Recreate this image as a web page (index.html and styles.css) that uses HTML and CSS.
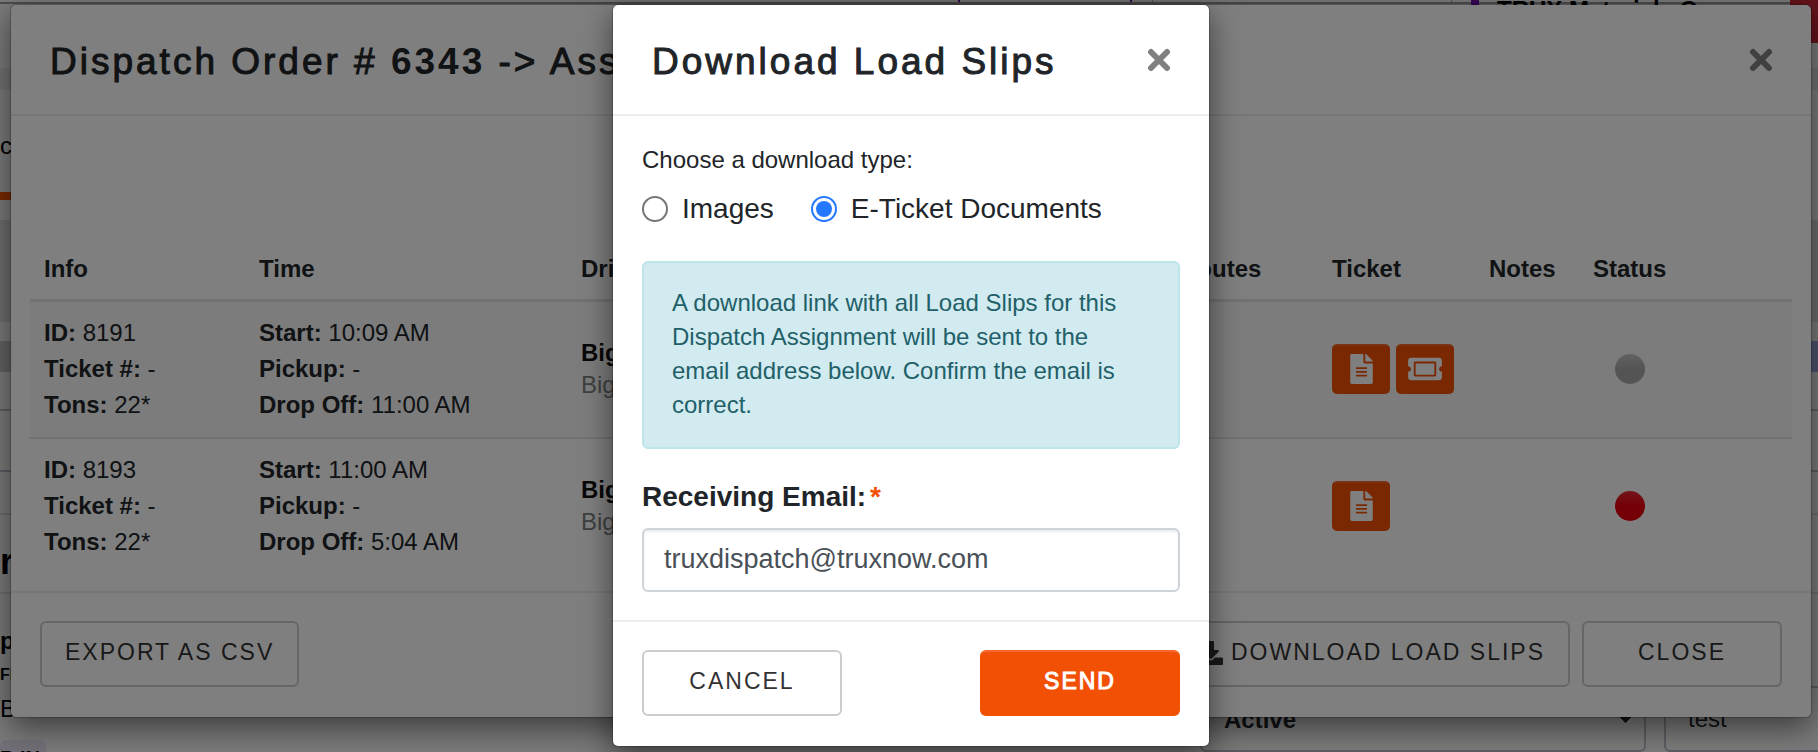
FILE: index.html
```
<!DOCTYPE html>
<html lang="en">
<head>
  <meta charset="UTF-8">
  <meta name="viewport" content="width=device-width, initial-scale=1.0">
  <title>Dispatch Order</title>
  <link rel="stylesheet" href="styles.css">
</head>
<body>
  <svg hidden>
    <symbol id="icon-close" viewBox="0 0 24 24">
      <path d="M4 4L20 20M20 4L4 20" fill="none" stroke="currentColor" stroke-width="6" stroke-linecap="round"/>
    </symbol>
    <symbol id="icon-file" viewBox="0 0 384 512">
      <path fill="currentColor" fill-rule="evenodd" d="M224 136V0H24C11 0 0 11 0 24v464c0 13 11 24 24 24h336c13 0 24-11 24-24V160H248c-13 0-24-11-24-24zm64 236c0 7-5 12-12 12H108c-7 0-12-5-12-12v-8c0-7 5-12 12-12h168c7 0 12 5 12 12zm0-64c0 7-5 12-12 12H108c-7 0-12-5-12-12v-8c0-7 5-12 12-12h168c7 0 12 5 12 12zm0-72v8c0 7-5 12-12 12H108c-7 0-12-5-12-12v-8c0-7 5-12 12-12h168c7 0 12 5 12 12zM384 122v6H256V0h6c6 0 12 3 17 7l98 98c4 4 7 11 7 17z"/>
    </symbol>
    <symbol id="icon-ticket" viewBox="0 0 576 512">
      <path fill="currentColor" fill-rule="evenodd" d="M128 160h320v192H128zm400 96c0 27 21 48 48 48v96c0 27-21 48-48 48H48c-27 0-48-21-48-48v-96c27 0 48-21 48-48s-21-48-48-48v-96c0-27 21-48 48-48h480c27 0 48 21 48 48v96c-27 0-48 21-48 48zM480 152c0-13-11-24-24-24H120c-13 0-24 11-24 24v208c0 13 11 24 24 24h336c13 0 24-11 24-24z"/>
    </symbol>
    <symbol id="icon-download" viewBox="0 0 512 512">
      <path fill="currentColor" d="M216 0h80c13 0 24 11 24 24v168h88c18 0 27 22 14 34L270 378c-8 7-20 7-28 0L90 226c-13-12-4-34 14-34h88V24c0-13 11-24 24-24zm296 376v112c0 13-11 24-24 24H24c-13 0-24-11-24-24V376c0-13 11-24 24-24h147l49 49c20 20 52 20 72 0l49-49h147c13 0 24 11 24 24z"/>
    </symbol>
  </svg>

  <div class="page">
    <div class="tabs">
      <div class="tabs-line">
        <span class="tab"></span>
        <span class="tab-end"></span>
        <span class="customer">TRUX Materials Corp</span>
      </div>
      <span class="alert-flag"></span>
    </div>
    <div class="band"></div>
    <div class="nav"><span>c</span></div>
    <div class="toolbar"></div>
    <div class="list-head"></div>
    <div class="list-row short"></div>
    <div class="list-row"></div>
    <div class="list-row faint"></div>
    <div class="section-title">r</div>
    <div class="details">
      <strong>p</strong>
      <small>FI</small>
      <span>B</span>
    </div>
    <div class="fields">
      <span class="chip">B IN</span>
      <div class="field-row">
        <select class="field field-status" aria-label="Status"><option>Active</option></select>
        <input class="field" type="text" value="test" aria-label="Name">
      </div>
    </div>
  </div>

  <div class="layer">
    <div class="modal">
      <div class="modal-header">
        <h2>Dispatch Order # <b>6343</b> -&gt; Ass</h2>
        <button class="close" aria-label="Close"><svg><use href="#icon-close"/></svg></button>
      </div>
      <div class="modal-body loads">
        <table>
          <thead>
            <tr>
              <th class="col-info">Info</th>
              <th class="col-time">Time</th>
              <th>Driver</th>
              <th class="col-routes">Routes</th>
              <th class="col-ticket">Ticket</th>
              <th class="col-notes">Notes</th>
              <th class="col-status">Status</th>
            </tr>
          </thead>
          <tbody>
            <tr>
              <td><b>ID:</b> 8191<br><b>Ticket #:</b> -<br><b>Tons:</b> 22*</td>
              <td><b>Start:</b> 10:09 AM<br><b>Pickup:</b> -<br><b>Drop Off:</b> 11:00 AM</td>
              <td class="driver"><b>Big</b><span>Big</span></td>
              <td></td>
              <td>
                <div class="ticket-actions">
                  <button class="icon-btn" aria-label="Load slip"><svg class="file"><use href="#icon-file"/></svg></button>
                  <button class="icon-btn" aria-label="E-ticket"><svg class="ticket"><use href="#icon-ticket"/></svg></button>
                </div>
              </td>
              <td></td>
              <td><div class="dot"></div></td>
            </tr>
            <tr>
              <td><b>ID:</b> 8193<br><b>Ticket #:</b> -<br><b>Tons:</b> 22*</td>
              <td><b>Start:</b> 11:00 AM<br><b>Pickup:</b> -<br><b>Drop Off:</b> 5:04 AM</td>
              <td class="driver"><b>Big</b><span>Big</span></td>
              <td></td>
              <td>
                <div class="ticket-actions">
                  <button class="icon-btn" aria-label="Load slip"><svg class="file"><use href="#icon-file"/></svg></button>
                </div>
              </td>
              <td></td>
              <td><div class="dot dot-red"></div></td>
            </tr>
          </tbody>
        </table>
      </div>
      <div class="modal-footer">
        <button class="btn">EXPORT AS CSV</button>
        <div class="btn-group">
          <button class="btn"><svg><use href="#icon-download"/></svg>DOWNLOAD LOAD SLIPS</button>
          <button class="btn btn-wide">CLOSE</button>
        </div>
      </div>
    </div>
  </div>

  <div class="layer backdrop">
    <form class="modal modal-small">
      <div class="modal-header">
        <h2>Download Load Slips</h2>
        <button type="button" class="close" aria-label="Close"><svg><use href="#icon-close"/></svg></button>
      </div>
      <div class="modal-body">
        <p>Choose a download type:</p>
        <div class="radios">
          <label><input type="radio" name="type" value="images">Images</label>
          <label><input type="radio" name="type" value="etickets" checked>E-Ticket Documents</label>
        </div>
        <div class="alert">A download link with all Load Slips for this Dispatch Assignment will be sent to the email address below. Confirm the email is correct.</div>
        <label class="email-label" for="email">Receiving Email:<span>*</span></label>
        <input class="email" id="email" type="email" value="truxdispatch@truxnow.com">
      </div>
      <div class="modal-footer">
        <button type="button" class="btn btn-wide">CANCEL</button>
        <button type="submit" class="btn btn-wide btn-primary">SEND</button>
      </div>
    </form>
  </div>
</body>
</html>
```

FILE: styles.css
```
* {
  box-sizing: border-box;
  margin: 0;
  padding: 0;
}
body {
  font-family: "Liberation Sans", Arial, sans-serif;
  font-size: 24px;
  line-height: 36px;
  color: #212529;
  display: grid;
  grid-template-columns: minmax(0, 1fr);
  grid-template-rows: 100vh;
  overflow: hidden;
}
button, input, select {
  font-family: inherit;
}

/* page behind the dialogs */
.page, .layer {
  grid-area: 1 / 1;
}
.page {
  background-color: #f5f5f5;
  overflow: hidden;
  color: #000;
}
.tabs {
  display: flex;
  justify-content: space-between;
  align-items: flex-start;
  height: 68px;
}
.tabs-line {
  flex: 1;
  display: flex;
  justify-content: flex-end;
  height: 4px;
  border-bottom: 2px solid #999;
}
.tab {
  width: 174px;
  border: solid #6a0dad;
  border-width: 0 2px;
}
.tab-end {
  width: 300px;
  margin-left: 20px;
  border: solid #aaa;
  border-width: 0 1px;
}
.customer {
  width: 319px;
  height: 20px;
  margin-left: 19px;
  padding-left: 18px;
  border-left: 8px solid #6a0dad;
  font-weight: bold;
  line-height: 20px;
}
.alert-flag {
  width: 28px;
  height: 43px;
  background-color: #c82333;
}
.band {
  height: 22px;
  background-color: #e4e4e6;
}
.nav {
  height: 130px;
  padding-top: 38px;
  line-height: 36px;
}
.nav span {
  display: block;
  width: 40px;
  height: 72px;
  border-bottom: 8px solid #f25105;
}
.toolbar {
  height: 102px;
  margin-bottom: 19px;
  background-color: #dcdcdc;
}
.list-head {
  height: 31px;
  background: linear-gradient(to right, #c4c4c4 50%, #9aa8e0 50%);
}
.list-row {
  height: 61px;
  border-bottom: 2px solid #b4bcc4;
}
.list-row.short {
  height: 39px;
}
.list-row.faint {
  height: 43px;
  border-bottom-color: #dcdcdc;
}
.section-title {
  height: 79px;
  padding-top: 29px;
  border-bottom: 2px solid #dcdcdc;
  font-size: 36px;
  font-weight: bold;
}
.details {
  height: 126px;
  padding-top: 30px;
  display: flex;
  flex-direction: column;
  line-height: 34px;
}
.details small {
  font-size: 16px;
  font-weight: bold;
}
.fields {
  display: flex;
  justify-content: space-between;
  align-items: flex-start;
}
.chip {
  width: 46px;
  margin-top: 20px;
  border-radius: 6px;
  background-color: #e6dff0;
  font-size: 20px;
  font-weight: bold;
  white-space: nowrap;
}
.field-row {
  display: flex;
  gap: 18px;
  margin-right: -200px;
}
.field {
  width: 354px;
  height: 66px;
  margin-top: -34px;
  padding: 0 22px;
  border: 2px solid #b4bcc4;
  border-radius: 6px;
  background-color: #f5f5f5;
  color: #212529;
  font-size: 24px;
}
.field-status {
  appearance: none;
  width: 446px;
  background-image: conic-gradient(from -45deg at 50% 100%, #212529 90deg, transparent 0);
  background-image: linear-gradient(45deg, transparent 50%, #212529 50%), linear-gradient(-45deg, transparent 50%, #212529 50%);
  background-position: right 18px center, right 10px center;
  background-size: 8px 8px;
  background-repeat: no-repeat;
  font-weight: bold;
}

/* dialogs */
.layer {
  display: flex;
  justify-content: center;
  align-items: flex-start;
  padding: 4px 6px 0 10px;
}
.backdrop {
  background-color: rgba(0, 0, 0, 0.5);
}
.modal {
  width: 100%;
  background-color: #fff;
  border: 1px solid rgba(0, 0, 0, 0.2);
  background-clip: padding-box;
  border-radius: 6px;
  box-shadow: 0 10px 30px rgba(0, 0, 0, 0.5);
}
.modal-small {
  max-width: 598px;
}
.modal-header {
  display: flex;
  justify-content: space-between;
  align-items: center;
  height: 111px;
  padding: 0 38px 0 39px;
  border-bottom: 2px solid #ededed;
}
h2 {
  padding-top: 4px;
  font-size: 37px;
  font-weight: normal;
  letter-spacing: 3px;
  -webkit-text-stroke: 1px currentColor;
}
h2 b {
  -webkit-text-stroke: 0;
}
.close {
  display: flex;
  color: #808080;
  background: none;
  border: none;
  cursor: pointer;
}
.close svg {
  width: 24px;
  height: 24px;
}
.modal-body {
  padding: 26px 29px 28px;
}
.modal-footer {
  display: flex;
  justify-content: space-between;
  padding: 28px 29px 30px;
  border-top: 2px solid #ededed;
}
.btn-group {
  display: flex;
  gap: 12px;
}
.btn {
  display: flex;
  justify-content: center;
  align-items: center;
  gap: 8px;
  height: 66px;
  padding: 0 23px 3px;
  border: 2px solid #ccc;
  border-radius: 6px;
  background-color: #fff;
  color: #333;
  font-size: 23px;
  letter-spacing: 2px;
  cursor: pointer;
}
.btn svg {
  width: 24px;
  height: 24px;
}
.btn-wide {
  width: 200px;
}
.btn-primary {
  background-color: #f25105;
  border-color: #f25105;
  border-top-color: #f4692a;
  color: #fff;
  -webkit-text-stroke: 1px #fff;
}

/* loads table */
.loads {
  padding: 123px 19px 17px;
}
table {
  width: 100%;
  table-layout: fixed;
  border-collapse: collapse;
}
th {
  padding: 12px 14px;
  text-align: left;
  border-bottom: 3px solid #dee2e6;
}
td {
  padding: 13px 14px 14px;
}
tbody tr {
  height: 136px;
}
tbody tr:first-child {
  background-color: #f8f8f8;
  border-bottom: 2px solid #dee2e6;
}
.col-info {
  width: 215px;
}
.col-time {
  width: 322px;
}
.col-routes {
  width: 152px;
}
.col-ticket {
  width: 157px;
}
.col-notes {
  width: 104px;
}
.col-status {
  width: 213px;
}
.driver {
  color: #111;
  line-height: 32px;
}
.driver span {
  display: block;
  color: #808080;
}
.ticket-actions {
  display: flex;
  gap: 6px;
}
.icon-btn {
  display: flex;
  justify-content: center;
  align-items: center;
  width: 58px;
  height: 50px;
  border: 2px solid #f25105;
  border-top-color: #f4692a;
  border-radius: 5px;
  background-color: #f25105;
  color: #fff;
  cursor: pointer;
}
.file {
  width: 23px;
  height: 30px;
}
.ticket {
  width: 34px;
  height: 30px;
}
.dot {
  width: 30px;
  height: 30px;
  margin-left: 22px;
  border-radius: 50%;
  background: linear-gradient(#c4c4c4, #a8a8a8 50%);
}
.dot-red {
  background: linear-gradient(#e62b35, #e8000b 50%);
}

/* download form */
.radios {
  display: flex;
  gap: 37px;
  margin-top: 13px;
  font-size: 28px;
}
.radios label {
  display: flex;
  align-items: center;
  gap: 14px;
}
.radios input {
  appearance: none;
  display: grid;
  place-items: center;
  width: 26px;
  height: 26px;
  border: 2px solid #767676;
  border-radius: 50%;
}
.radios input:checked {
  border-color: #2478ff;
}
.radios input:checked::before {
  content: "";
  width: 16px;
  height: 16px;
  border-radius: 50%;
  background-color: #2478ff;
}
.alert {
  margin: 34px 0 30px;
  padding: 23px 28px 25px;
  border: 2px solid #bee5eb;
  border-radius: 6px;
  background-color: #d1ebf0;
  color: #226069;
  line-height: 34px;
}
.email-label {
  display: block;
  margin-bottom: 13px;
  font-size: 28px;
  font-weight: bold;
}
.email-label span {
  margin-left: 4px;
  color: #f25105;
}
.email {
  display: block;
  width: 100%;
  height: 64px;
  padding: 0 20px 2px;
  border: 2px solid #ced4da;
  border-radius: 6px;
  box-shadow: inset 0 2px 2px rgba(0, 0, 0, 0.08);
  background-color: #fff;
  color: #495057;
  font-size: 27px;
}
```
